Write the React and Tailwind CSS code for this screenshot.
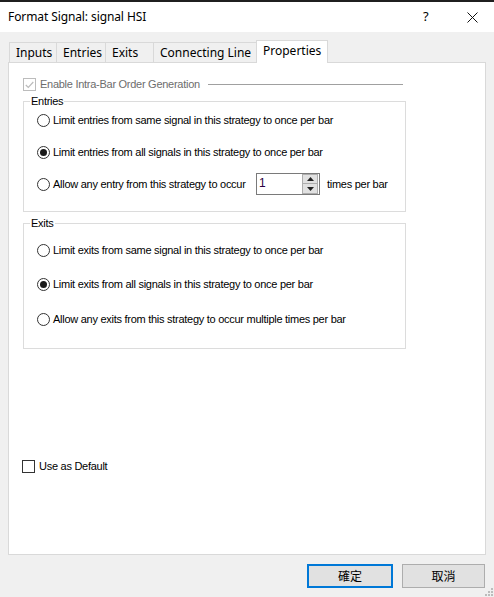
import React from "react";

const Radio = ({ checked }) => (
  <span className="w-[13px] h-[13px] rounded-full border border-[#333333] bg-white flex items-center justify-center shrink-0">
    {checked && <span className="w-[7px] h-[7px] rounded-full bg-[#1a1a1a]" />}
  </span>
);

const RadioRow = ({ checked, children, className = "" }) => (
  <div className={"flex items-center h-[20px] ml-[13px] " + className}>
    <Radio checked={checked} />
    <span className="ml-[3px] whitespace-nowrap">{children}</span>
  </div>
);

const Group = ({ title, className = "", children }) => (
  <div className={"relative w-[383px] border border-[#dcdcdc] " + className}>
    <span className="absolute left-[6px] top-[-8px] bg-white px-[1px] leading-[14px] text-black">
      {title}
    </span>
    {children}
  </div>
);

const Spinner = () => (
  <div className="w-[64px] h-[22px] border border-[#7a7a7a] bg-white flex items-stretch shrink-0">
    <span className="flex-1 pl-[2px] leading-[18px] text-[12px] text-[#2b0040] tracking-normal">1</span>
    <div className="w-[16px] flex flex-col justify-center mr-[1px]">
      <div className="h-[10px] border border-[#adadad] bg-[#e1e1e1] flex items-center justify-center">
        <svg width="7" height="4" viewBox="0 0 7 4"><path d="M3.5 0 L7 4 L0 4 Z" fill="#222" /></svg>
      </div>
      <div className="h-[10px] border border-t-0 border-[#adadad] bg-[#e1e1e1] flex items-center justify-center">
        <svg width="7" height="4" viewBox="0 0 7 4"><path d="M0 0 L7 0 L3.5 4 Z" fill="#222" /></svg>
      </div>
    </div>
  </div>
);

export default function App() {
  const sans = { fontFamily: '"Liberation Sans", Arial, sans-serif' };
  return (
    <div
      className="w-[494px] h-[597px] bg-[#f0f0f0] relative overflow-hidden text-black"
      style={{ fontFamily: '"Noto Sans", "Noto Sans CJK TC", sans-serif' }}
    >
      <div className="h-[2px] bg-[#1f1f1f]" />
      {/* Title bar */}
      <div className="h-[30px] bg-white flex items-center relative">
        <span className="ml-[8px] text-[12px] leading-[16px] -mt-[1px] tracking-[-0.1px]">Format Signal: signal HSI</span>
        <span className="absolute left-[423px] top-[6px] text-[13px] leading-[16px]">?</span>
        <svg className="absolute left-[467px] top-[10px]" width="11" height="11" viewBox="0 0 11 11">
          <path d="M0.5 0.5 L10.5 10.5 M10.5 0.5 L0.5 10.5" stroke="#111" strokeWidth="1" />
        </svg>
      </div>

      {/* Tabs */}
      <div className="flex items-end ml-[9px] mt-[8px] h-[22px] text-[12px]">
        <div className="w-[47px] h-[20px] border-l border-t border-[#d9d9d9] pl-[6px] leading-[20px]">Inputs</div>
        <div className="w-[49px] h-[20px] border-l border-t border-[#d9d9d9] pl-[6px] leading-[20px]">Entries</div>
        <div className="w-[48px] h-[20px] border-l border-t border-[#d9d9d9] pl-[6px] leading-[20px]">Exits</div>
        <div className="w-[103px] h-[20px] border-l border-t border-[#d9d9d9] pl-[6px] leading-[20px]">Connecting Line</div>
        <div className="w-[72px] h-[23px] border-l border-t border-r border-[#d9d9d9] bg-white pl-[6px] leading-[20px] relative z-10 -mb-[1px]">Properties</div>
      </div>

      {/* Panel */}
      <div className="ml-[8px] w-[478px] h-[493px] bg-white border border-[#d9d9d9] pl-[14px] text-[11px] tracking-[-0.27px]" style={sans}>
        <div className="flex items-center mt-[15px] h-[13px]">
          <span className="w-[13px] h-[13px] border border-[#bcbcbc] flex items-center justify-center">
            <svg width="9" height="8" viewBox="0 0 9 8"><path d="M0.8 4 L3.3 6.5 L8.3 1" stroke="#bcbcbc" strokeWidth="1.2" fill="none" /></svg>
          </span>
          <span className="ml-[4px] w-[164px] text-[#6d6d6d] whitespace-nowrap">Enable Intra-Bar Order Generation</span>
          <span className="ml-[4px] w-[195px] h-px bg-[#a0a0a0]" />
        </div>

        <Group title="Entries" className="mt-[10px] h-[111px]">
          <RadioRow checked={false} className="mt-[8px]">Limit entries from same signal in this strategy to once per bar</RadioRow>
          <RadioRow checked className="mt-[12px]">Limit entries from all signals in this strategy to once per bar</RadioRow>
          <div className="flex items-center h-[22px] ml-[13px] mt-[11px]">
            <Radio />
            <span className="ml-[3px] w-[203px] whitespace-nowrap">Allow any entry from this strategy to occur</span>
            <Spinner />
            <span className="ml-[7px] whitespace-nowrap">times per bar</span>
          </div>
        </Group>

        <Group title="Exits" className="mt-[11px] h-[126px]">
          <RadioRow className="mt-[16px]">Limit exits from same signal in this strategy to once per bar</RadioRow>
          <RadioRow checked className="mt-[14px]">Limit exits from all signals in this strategy to once per bar</RadioRow>
          <RadioRow className="mt-[15px]">Allow any exits from this strategy to occur multiple times per bar</RadioRow>
        </Group>

        <div className="flex items-center -ml-[1px] mt-[111px] h-[13px]">
          <span className="w-[13px] h-[13px] border border-[#333333] bg-white" />
          <span className="ml-[4px] whitespace-nowrap">Use as Default</span>
        </div>
      </div>

      {/* Buttons */}
      <div className="flex justify-end gap-[9px] pr-[9px] mt-[9px] text-[12px]" style={{ fontFamily: '"Noto Sans CJK TC", "Noto Sans", sans-serif' }}>
        <button className="w-[86px] h-[24px] border-2 border-[#0078d7] bg-[#e1e1e1] leading-[18px]">確定</button>
        <button className="w-[83px] h-[24px] border border-[#adadad] bg-[#e1e1e1] leading-[20px]">取消</button>
      </div>

      {/* Size grip */}
      <svg className="absolute right-[1px] bottom-[1px]" width="9" height="9" viewBox="0 0 9 9">
        <rect x="7" y="1" width="2" height="2" fill="#bcbcbc" />
        <rect x="4" y="4" width="2" height="2" fill="#bcbcbc" />
        <rect x="7" y="4" width="2" height="2" fill="#bcbcbc" />
        <rect x="1" y="7" width="2" height="2" fill="#bcbcbc" />
        <rect x="4" y="7" width="2" height="2" fill="#bcbcbc" />
        <rect x="7" y="7" width="2" height="2" fill="#bcbcbc" />
      </svg>
    </div>
  );
}
